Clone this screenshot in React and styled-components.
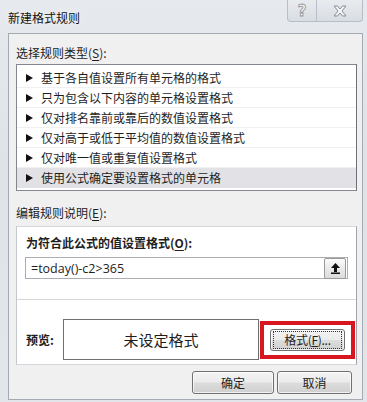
import styled, { createGlobalStyle } from "styled-components";

const GlobalStyle = createGlobalStyle`
  html, body {
    margin: 0;
    padding: 0;
    background: #e4e7eb;
  }
  body {
    font-family: "Noto Sans CJK SC", "Noto Sans", sans-serif;
    font-size: 12px;
    color: #1e1e1e;
  }
`;

const Frame = styled.div`
  width: 367px;
  height: 402px;
  box-sizing: border-box;
  display: flex;
  flex-direction: column;
  background: linear-gradient(180deg, #e6e9ed 0%, #dfe3e8 40%, #e2e5e9 100%);
  overflow: hidden;
`;

const TitleBar = styled.div`
  height: 33px;
  flex-shrink: 0;
  display: flex;
  align-items: flex-start;
  justify-content: space-between;
`;

const Title = styled.div`
  padding: 10px 0 0 8px;
  font-size: 12px;
  line-height: 16px;
  color: #111;
  text-shadow: 0 0 6px rgba(255, 255, 255, 0.9);
`;

const Caption = styled.div`
  display: flex;
  margin-right: 4px;
`;

const CaptionButton = styled.div`
  width: ${(p) => p.$w}px;
  height: 22px;
  box-sizing: border-box;
  display: flex;
  align-items: center;
  justify-content: center;
  border: 1px solid #b7bec7;
  border-top: 0;
  border-left-width: ${(p) => (p.$first ? 1 : 0)}px;
  border-radius: ${(p) => (p.$first ? "0 0 0 4px" : "0 0 4px 0")};
  background: linear-gradient(180deg, #e9ecef 0%, #d8dde3 100%);
  color: #f4f4f4;
  font-family: "DejaVu Sans", sans-serif;
  font-size: 15px;
  font-weight: bold;
  -webkit-text-stroke: 0.8px #8a939c;
`;

const Body = styled.div`
  margin: 0 0 2px 8px;
  width: 355px;
  flex: 1;
  box-sizing: border-box;
  border: 1px solid #a4aab2;
  background: #f0f0f0;
  padding: 0 5px 0 7px;
  display: flex;
  flex-direction: column;
`;

const Label = styled.div`
  margin-top: ${(p) => p.$mt}px;
  line-height: 16px;
  font-size: 12px;
  color: #1e1e1e;
  padding-left: ${(p) => p.$pl || 0}px;
  font-weight: ${(p) => (p.$bold ? "bold" : "normal")};

  u {
    text-decoration: underline;
    text-underline-offset: 2px;
  }
`;

const ListBox = styled.div`
  margin-top: 3px;
  height: 127px;
  box-sizing: border-box;
  border: 1px solid #828790;
  border-right-color: #6d7179;
  background: #fff;
  padding-top: 3px;
  display: flex;
  flex-direction: column;
`;

const Row = styled.div`
  height: 20px;
  box-sizing: border-box;
  display: flex;
  align-items: center;
  gap: 8px;
  padding-left: 9px;
  border-bottom: 1px solid ${(p) => (p.$selected ? "transparent" : "#f0f0f0")};
  background: ${(p) => (p.$selected ? "#e2e2e6" : "transparent")};
  color: #1e1e1e;
  line-height: 16px;
`;

const Arrow = styled.span`
  width: 0;
  height: 0;
  border-top: 4px solid transparent;
  border-bottom: 4px solid transparent;
  border-left: 7px solid #111;
`;

const Section = styled.div`
  margin-top: 5px;
  height: 139px;
  box-sizing: border-box;
  border: 1px solid #d3d7db;
  border-left-color: #c4c8cc;
  border-right-color: #9ea3a8;
  background: #fff;
  display: flex;
  flex-direction: column;
  padding-top: 8px;
`;

const InputRow = styled.div`
  margin: 6px 0 0 8px;
  width: 323px;
  height: 22px;
  box-sizing: border-box;
  border: 1px solid #abadb3;
  display: flex;
  align-items: center;
  justify-content: space-between;
  padding: 0 0 0 5px;
  font-family: "Open Sans", "Noto Sans", sans-serif;
  font-size: 12.5px;
  color: #1e1e1e;
`;

const PickButton = styled.div`
  width: 22px;
  height: 21px;
  box-sizing: border-box;
  border: 1px solid #9a9a9a;
  border-radius: 2px;
  background: linear-gradient(180deg, #fbfbfb 0%, #eaeaea 50%, #dcdcdc 100%);
  display: flex;
  align-items: center;
  justify-content: center;
  margin-right: 1px;
`;

const Divider = styled.div`
  margin-top: 20px;
  height: 1px;
  background: #d7d7d7;
`;

const PreviewRow = styled.div`
  margin-top: 19px;
  display: flex;
  align-items: center;
  padding-left: 9px;
`;

const PreviewLabel = styled.div`
  width: 37px;
  font-weight: bold;
  line-height: 16px;
`;

const PreviewBox = styled.div`
  width: 196px;
  height: 41px;
  box-sizing: border-box;
  border: 1px solid #6f6f6f;
  display: flex;
  align-items: center;
  justify-content: center;
  font-size: 15px;
  color: #1e1e1e;
`;

const Highlight = styled.div`
  margin-left: 1px;
  width: 95px;
  height: 38px;
  box-sizing: border-box;
  border: 4px solid #d8161f;
  display: flex;
  align-items: center;
  justify-content: center;
`;

const Button = styled.div`
  width: ${(p) => p.$w}px;
  height: ${(p) => p.$h}px;
  box-sizing: border-box;
  border: 1px solid #707070;
  border-radius: 3px;
  background: linear-gradient(180deg, #f4f4f4 0%, #ebebeb 48%, #dddddd 52%, #cfcfcf 100%);
  box-shadow: inset 0 0 0 1px rgba(255, 255, 255, 0.7);
  display: flex;
  align-items: center;
  justify-content: center;
  font-size: 12px;
  color: #1e1e1e;
`;

const FocusRing = styled.span`
  display: flex;
  align-items: center;
  justify-content: center;
  width: 67px;
  height: 16px;
  border: 1px dotted #333;
  letter-spacing: -0.3px;
`;

const Footer = styled.div`
  margin-top: 6px;
  display: flex;
  justify-content: flex-end;
  gap: 3px;
  padding-right: 5px;
`;

const rules = [
  "基于各自值设置所有单元格的格式",
  "只为包含以下内容的单元格设置格式",
  "仅对排名靠前或靠后的数值设置格式",
  "仅对高于或低于平均值的数值设置格式",
  "仅对唯一值或重复值设置格式",
  "使用公式确定要设置格式的单元格",
];

export default function App() {
  return (
    <>
      <GlobalStyle />
      <Frame>
        <TitleBar>
          <Title>新建格式规则</Title>
          <Caption>
            <CaptionButton $w={30} $first>?</CaptionButton>
            <CaptionButton $w={46}>
              <svg width="16" height="12" viewBox="0 0 16 12">
                <path
                  d="M2 1h3.5L8 4l2.5-3H14l-4 5 4 5h-3.5L8 8l-2.5 3H2l4-5z"
                  fill="#f6f6f6"
                  stroke="#858e97"
                  strokeWidth="1"
                  strokeLinejoin="round"
                />
              </svg>
            </CaptionButton>
          </Caption>
        </TitleBar>

        <Body>
          <Label $mt={11}>
            选择规则类型(<u>S</u>):
          </Label>
          <ListBox>
            {rules.map((rule, i) => (
              <Row key={rule} $selected={i === rules.length - 1}>
                <Arrow />
                {rule}
              </Row>
            ))}
          </ListBox>

          <Label $mt={14}>
            编辑规则说明(<u>E</u>):
          </Label>
          <Section>
            <Label $mt={0} $pl={9} $bold>
              为符合此公式的值设置格式(<u>O</u>):
            </Label>
            <InputRow>
              =today()-c2&gt;365
              <PickButton>
                <svg width="11" height="12" viewBox="0 0 11 12">
                  <path d="M5.5 1L1 6h3v4h3V6h3z" fill="#111" />
                  <rect x="1" y="10.5" width="9" height="1.5" fill="#111" />
                </svg>
              </PickButton>
            </InputRow>
            <Divider />
            <PreviewRow>
              <PreviewLabel>预览:</PreviewLabel>
              <PreviewBox>未设定格式</PreviewBox>
              <Highlight>
                <Button $w={75} $h={22}>
                  <FocusRing>
                    格式(<u>F</u>)...
                  </FocusRing>
                </Button>
              </Highlight>
            </PreviewRow>
          </Section>

          <Footer>
            <Button $w={82} $h={23}>确定</Button>
            <Button $w={75} $h={23}>取消</Button>
          </Footer>
        </Body>
      </Frame>
    </>
  );
}
